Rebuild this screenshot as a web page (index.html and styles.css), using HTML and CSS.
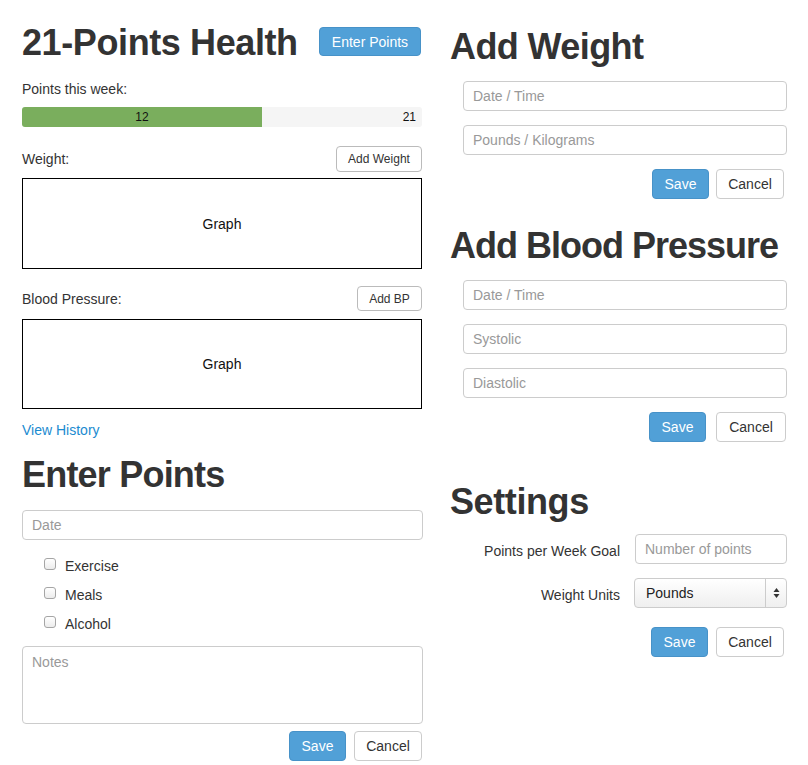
FILE: index.html
```html
<!DOCTYPE html>
<html>
<head>
<meta charset="utf-8">
<link rel="stylesheet" href="styles.css">
</head>
<body>
<div class="page">
  <div class="col-left">
    <div class="header">
      <h1 class="title">21-Points Health</h1>
      <button class="btn btn-primary btn-header">Enter Points</button>
    </div>
    <div class="label week">Points this week:</div>
    <div class="progress">
      <div class="progress-fill" style="width:60%">12</div>
      <div class="progress-goal">21</div>
    </div>
    <div class="row-head first">
      <span class="label">Weight:</span>
      <button class="btn btn-sm">Add Weight</button>
    </div>
    <div class="graph">Graph</div>
    <div class="row-head second">
      <span class="label">Blood Pressure:</span>
      <button class="btn btn-sm">Add BP</button>
    </div>
    <div class="graph graph2">Graph</div>
    <a class="link" href="#">View History</a>
    <h1 class="title title-points">Enter Points</h1>
    <div class="input input-date">Date</div>
    <div class="checks">
      <label class="check"><span class="box"></span>Exercise</label>
      <label class="check"><span class="box"></span>Meals</label>
      <label class="check"><span class="box"></span>Alcohol</label>
    </div>
    <div class="textarea">Notes</div>
    <div class="actions actions-left">
      <button class="btn btn-primary btn-save">Save</button>
      <button class="btn btn-default btn-cancel">Cancel</button>
    </div>
  </div>
  <div class="col-right">
    <h1 class="title title-weight">Add Weight</h1>
    <div class="form">
      <div class="input">Date / Time</div>
      <div class="input">Pounds / Kilograms</div>
      <div class="actions actions-w">
        <button class="btn btn-primary btn-save">Save</button>
        <button class="btn btn-default btn-cancel">Cancel</button>
      </div>
    </div>
    <h1 class="title title-bp">Add Blood Pressure</h1>
    <div class="form">
      <div class="input">Date / Time</div>
      <div class="input">Systolic</div>
      <div class="input">Diastolic</div>
      <div class="actions actions-bp">
        <button class="btn btn-primary btn-save">Save</button>
        <button class="btn btn-default btn-cancel">Cancel</button>
      </div>
    </div>
    <h1 class="title title-settings">Settings</h1>
    <div class="settings">
      <span class="set-label">Points per Week Goal</span>
      <div class="input input-goal">Number of points</div>
      <span class="set-label">Weight Units</span>
      <div class="select">
        <span class="select-text">Pounds</span>
        <span class="select-arrows">
          <svg width="7" height="12" viewBox="0 0 7 12"><path d="M3.5 1 L6.5 5 L0.5 5 Z M3.5 11 L6.5 7 L0.5 7 Z" fill="#333"/></svg>
        </span>
      </div>
    </div>
    <div class="actions actions-set">
      <button class="btn btn-primary btn-save">Save</button>
      <button class="btn btn-default btn-cancel">Cancel</button>
    </div>
  </div>
</div>
</body>
</html>
```
FILE: styles.css
```css
* { box-sizing: border-box; }
body {
  margin: 0;
  background: #fff;
  font-family: "Liberation Sans", Arial, sans-serif;
  font-size: 14px;
  color: #333;
}
.page {
  display: flex;
  padding-left: 22px;
  gap: 28px;
}
.col-left {
  width: 400px;
  display: flex;
  flex-direction: column;
}
.col-right {
  width: 337px;
  display: flex;
  flex-direction: column;
}
.title {
  margin: 0;
  font-size: 36px;
  font-weight: bold;
  line-height: 40px;
  color: #333;
  letter-spacing: -0.4px;
  white-space: nowrap;
}
.header {
  margin-top: 23px;
  display: flex;
  justify-content: space-between;
  align-items: flex-start;
}
.btn {
  font-family: "Liberation Sans", Arial, sans-serif;
  border-radius: 4px;
  cursor: pointer;
  padding: 0;
}
.btn-primary {
  background: #51a0d7;
  border: 1px solid #4792c8;
  color: #fff;
  font-size: 14px;
}
.btn-default {
  background: #fff;
  border: 1px solid #ccc;
  color: #333;
  font-size: 14px;
}
.btn-header {
  margin-top: 4px;
  width: 102px;
  height: 29px;
  margin-right: 1px;
}
.label { font-size: 14px; line-height: 20px; }
.week { margin-top: 16px; }
.progress {
  margin-top: 8px;
  height: 20px;
  background: #f5f5f5;
  border-radius: 3px;
  display: flex;
  font-size: 12px;
  line-height: 20px;
  color: #111;
  overflow: hidden;
}
.progress-fill {
  background: #7aae5d;
  text-align: center;
}
.progress-goal {
  flex: 1;
  text-align: right;
  padding-right: 6px;
}
.row-head {
  display: flex;
  justify-content: space-between;
  align-items: center;
}
.row-head.first { margin-top: 19px; }
.row-head.second { margin-top: 17px; }
.btn-sm {
  background: #fff;
  border: 1px solid #bbb;
  border-radius: 4px;
  color: #333;
  font-size: 12px;
  height: 26px;
}
.row-head.first .btn-sm { width: 86px; }
.row-head.second .btn-sm { width: 65px; height: 25px; }
.graph {
  margin-top: 6px;
  height: 91px;
  border: 1px solid #000;
  display: flex;
  align-items: center;
  justify-content: center;
  color: #111;
  font-size: 14px;
}
.graph2 { margin-top: 8px; height: 90px; }
.link {
  margin-top: 11px;
  color: #1b8bd0;
  text-decoration: none;
  line-height: 20px;
  align-self: flex-start;
}
.title-points { margin-top: 15px; letter-spacing: -0.8px; }
.input {
  height: 30px;
  border: 1px solid #ccc;
  border-radius: 4px;
  color: #999;
  font-size: 14px;
  line-height: 28px;
  padding-left: 9px;
  background: #fff;
}
.input-date { margin-top: 15px; width: 401px; }
.checks {
  margin-top: 11px;
  display: flex;
  flex-direction: column;
  padding-left: 22px;
}
.check {
  height: 29px;
  display: flex;
  align-items: center;
  color: #333;
}
.box {
  width: 12px;
  height: 12px;
  border: 1px solid #a5a5a5;
  border-radius: 3px;
  background: linear-gradient(#fff, #ececec);
  margin-right: 9px;
  margin-top: -3px;
}
.textarea {
  margin-top: 8px;
  height: 78px;
  width: 401px;
  border: 1px solid #ccc;
  border-radius: 4px;
  color: #999;
  padding: 6px 9px;
  line-height: 18px;
}
.actions {
  display: flex;
  justify-content: flex-end;
  gap: 8px;
}
.actions-left { margin-top: 7px; }
.btn-save { width: 57px; height: 30px; }
.btn-cancel { width: 68px; height: 30px; }
.title-weight { margin-top: 27px; letter-spacing: -0.6px; }
.form {
  padding-left: 13px;
  display: flex;
  flex-direction: column;
  gap: 14px;
}
.title-weight + .form { margin-top: 14px; }
.actions-w { margin-right: 3px; }
.actions-w .btn-save { margin-right: -1px; }
.title-bp { margin-top: 27px; letter-spacing: -1px; }
.title-bp + .form { margin-top: 14px; }
.actions-bp { margin-right: 1px; }
.actions-bp .btn-cancel { width: 70px; }
.actions-bp .btn-save { margin-right: 2px; }
.title-settings { margin-top: 40px; }
.settings {
  margin-top: 12px;
  display: grid;
  grid-template-columns: 170px 153px;
  column-gap: 14px;
  row-gap: 14px;
  align-items: center;
}
.set-label {
  text-align: right;
  font-size: 14px;
  color: #333;
  padding-top: 4px;
}
.input-goal { margin-left: 1px; }
.select {
  height: 30px;
  border: 1px solid #ccc;
  border-radius: 4px;
  background: linear-gradient(#fff, #efefef);
  display: flex;
  align-items: stretch;
  color: #222;
}
.select-text {
  flex: 1;
  line-height: 28px;
  padding-left: 11px;
}
.select-arrows {
  width: 21px;
  border-left: 1px solid #ccc;
  display: flex;
  align-items: center;
  justify-content: center;
}
.actions-set { margin-top: 19px; margin-right: 3px; }
```
